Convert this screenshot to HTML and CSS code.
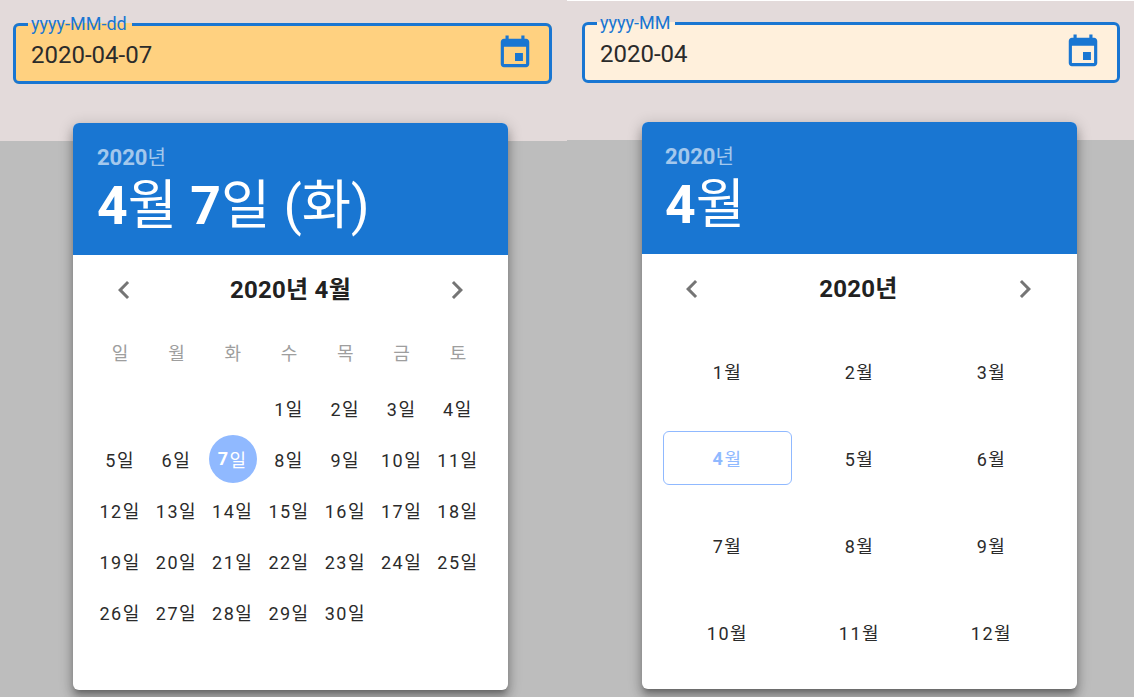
FILE: index.html
```html
<html>
<head>
  <title>Date pickers</title>
  <link rel="stylesheet" href="styles.css">
</head>
<body>
  <main class="page">
    <section class="demo demo-day">
      <div class="demo-top">
        <fieldset class="field field-day">
          <legend>yyyy-MM-dd</legend>
          <span class="field-value">2020-04-07</span>
          <svg class="field-icon" viewBox="0 0 24 24"><path d="M17 12h-5v5h5v-5zM16 1v2H8V1H6v2H5c-1.11 0-1.99.9-1.99 2L3 19c0 1.1.89 2 2 2h14c1.1 0 2-.9 2-2V5c0-1.1-.9-2-2-2h-1V1h-2zm3 18H5V8h14v11z"/></svg>
        </fieldset>
      </div>
      <div class="picker">
        <header class="picker-head">
          <div class="picker-year"><b>2020</b>년</div>
          <div class="picker-date"><b>4</b>월 <b>7</b>일 (화)</div>
        </header>
        <div class="picker-nav">
          <svg class="nav-icon" viewBox="0 0 24 24"><path d="M15.41 7.41 14 6l-6 6 6 6 1.41-1.41L10.83 12z"/></svg>
          <span class="nav-title">2020년 4월</span>
          <svg class="nav-icon" viewBox="0 0 24 24"><path d="M10 6 8.59 7.41 13.17 12l-4.58 4.59L10 18l6-6z"/></svg>
        </div>
        <div class="weekdays">
          <span>일</span><span>월</span><span>화</span><span>수</span><span>목</span><span>금</span><span>토</span>
        </div>
        <div class="days">
          <span></span><span></span><span></span>
          <span>1일</span><span>2일</span><span>3일</span><span>4일</span>
          <span>5일</span><span>6일</span><span class="day-on"><b>7</b>일</span><span>8일</span><span>9일</span><span>10일</span><span>11일</span>
          <span>12일</span><span>13일</span><span>14일</span><span>15일</span><span>16일</span><span>17일</span><span>18일</span>
          <span>19일</span><span>20일</span><span>21일</span><span>22일</span><span>23일</span><span>24일</span><span>25일</span>
          <span>26일</span><span>27일</span><span>28일</span><span>29일</span><span>30일</span>
        </div>
      </div>
    </section>

    <section class="demo demo-month">
      <div class="demo-top">
        <fieldset class="field field-month">
          <legend>yyyy-MM</legend>
          <span class="field-value">2020-04</span>
          <svg class="field-icon" viewBox="0 0 24 24"><path d="M17 12h-5v5h5v-5zM16 1v2H8V1H6v2H5c-1.11 0-1.99.9-1.99 2L3 19c0 1.1.89 2 2 2h14c1.1 0 2-.9 2-2V5c0-1.1-.9-2-2-2h-1V1h-2zm3 18H5V8h14v11z"/></svg>
        </fieldset>
      </div>
      <div class="picker">
        <header class="picker-head">
          <div class="picker-year"><b>2020</b>년</div>
          <div class="picker-date"><b>4</b>월</div>
        </header>
        <div class="picker-nav">
          <svg class="nav-icon" viewBox="0 0 24 24"><path d="M15.41 7.41 14 6l-6 6 6 6 1.41-1.41L10.83 12z"/></svg>
          <span class="nav-title">2020년</span>
          <svg class="nav-icon" viewBox="0 0 24 24"><path d="M10 6 8.59 7.41 13.17 12l-4.58 4.59L10 18l6-6z"/></svg>
        </div>
        <div class="months">
          <span>1월</span><span>2월</span><span>3월</span>
          <span class="month-on"><b>4</b>월</span><span>5월</span><span>6월</span>
          <span>7월</span><span>8월</span><span>9월</span>
          <span>10월</span><span>11월</span><span>12월</span>
        </div>
      </div>
    </section>
  </main>
</body>
</html>
```

FILE: styles.css
```css
* {
  box-sizing: border-box;
}

body {
  background-color: #fff;
  color: #212121;
  font-family: Roboto, "Noto Sans CJK KR", sans-serif;
  margin: 0;
  overflow: hidden;
}

.page {
  display: flex;
  height: 697px;
}

.demo {
  background-color: #bdbdbd;
  flex: 0 0 567px;
  position: relative;
}
.demo-month {
  background: linear-gradient(#fff 1px, #bdbdbd 1px);
}

.demo-top {
  background-color: #e3dada;
  height: 141px;
  padding: 14px 15px 0 13px;
}
.demo-month .demo-top {
  height: 139px;
  margin-top: 1px;
  padding: 12px 14px 0 15px;
}

.field {
  align-items: center;
  border: 3px solid #1976d2;
  border-radius: 6px;
  display: flex;
  height: 70px;
  justify-content: space-between;
  margin: 0;
  min-width: 0;
  padding: 0 15px 0 15px;
}
.field-day {
  background-color: #ffd180;
}
.field-month {
  background-color: #fff0dc;
}
.field legend {
  color: #1976d2;
  font-size: 18px;
  line-height: 20px;
  margin-left: -3px;
  padding: 0 5px 0 3px;
}
.field-value {
  color: #2b2b2b;
  font-size: 24px;
  margin-top: -6px;
}
.field-icon {
  fill: #1976d2;
  height: 38px;
  margin-top: -9px;
  width: 38px;
}

.picker {
  background-color: #fff;
  border-radius: 6px;
  box-shadow: 0 5px 5px -3px rgba(0,0,0,.25), 0 8px 10px 1px rgba(0,0,0,.2), 0 3px 14px 2px rgba(0,0,0,.16);
  height: 567px;
  left: 73px;
  overflow: hidden;
  position: absolute;
  top: 123px;
  width: 435px;
}
.demo-month .picker {
  left: 75px;
  top: 122px;
}

.picker-head {
  background-color: #1976d2;
  color: #fff;
  height: 132px;
  padding: 21px 24px 0;
}
.demo-month .picker-head {
  padding-left: 23px;
}
.picker-year {
  font-size: 20px;
  line-height: 27px;
  opacity: .6;
}
.picker-year b {
  font-family: Roboto, sans-serif;
  font-size: 22px;
  font-weight: 700;
}
.picker-date b {
  font-family: Roboto, sans-serif;
  font-weight: 700;
}
.picker-date {
  font-size: 53.5px;
  line-height: 67px;
}

.picker-nav {
  align-items: center;
  display: flex;
  height: 70px;
  justify-content: space-between;
  padding: 0 33px;
}
.demo-month .picker-nav {
  padding: 0 34px 0 32px;
}
.nav-icon {
  fill: #757575;
  height: 36px;
  width: 36px;
}
.nav-title {
  font-size: 24px;
  font-weight: 700;
  letter-spacing: .25px;
  line-height: 30px;
}

.weekdays,
.days {
  display: grid;
  grid-template-columns: repeat(7, 56.3px);
  margin: 0 19px;
  text-align: center;
}
.weekdays {
  color: #9e9e9e;
  font-size: 18px;
  line-height: 24px;
  margin-top: 17px;
}
.days {
  color: #2b2b2b;
  font-size: 18px;
  grid-auto-rows: 51.2px;
  letter-spacing: 1.5px;
  margin-top: 16px;
}
.days span {
  align-items: center;
  display: flex;
  justify-content: center;
}
.days .day-on {
  background-color: #90b9ff;
  border-radius: 50%;
  color: #fff;
  height: 48px;
  margin: auto;
  width: 48px;
}

.months {
  color: #2b2b2b;
  display: grid;
  font-size: 18px;
  grid-auto-rows: 54px;
  grid-template-columns: repeat(3, 129px);
  column-gap: 3px;
  row-gap: 33px;
  letter-spacing: 1.5px;
  margin: 20px 0 0 21px;
}
.months span {
  align-items: center;
  border: 1px solid transparent;
  border-radius: 6px;
  display: flex;
  justify-content: center;
}
.months .month-on {
  border-color: #90b9ff;
  color: #90b9ff;
}
```
